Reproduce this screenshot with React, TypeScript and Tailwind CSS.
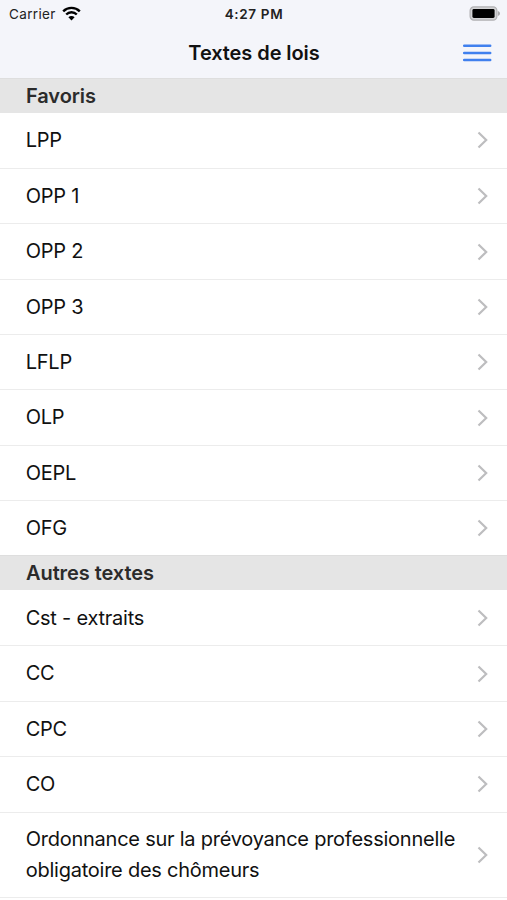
const sections = [
  {
    title: 'Favoris',
    items: ['LPP', 'OPP 1', 'OPP 2', 'OPP 3', 'LFLP', 'OLP', 'OEPL', 'OFG'],
  },
  {
    title: 'Autres textes',
    items: [
      'Cst - extraits',
      'CC',
      'CPC',
      'CO',
      'Ordonnance sur la prévoyance professionnelle obligatoire des chômeurs',
    ],
  },
];

function WifiIcon() {
  return (
    <svg className="-mt-px" width="19" height="15" viewBox="0 0 19 15" fill="none" stroke="#000" strokeWidth="2.4">
      <path d="M1.2 5.3a11.8 11.8 0 0 1 16.6 0" />
      <path d="M4.2 8.5a7.5 7.5 0 0 1 10.6 0" />
      <path d="M9.5 14.4 6.4 11.2a4.4 4.4 0 0 1 6.2 0Z" fill="#000" stroke="none" />
    </svg>
  );
}

function BatteryIcon() {
  return (
    <svg width="32" height="15" viewBox="0 0 32 15">
      <rect x="1.1" y="0.9" width="26.8" height="13.2" rx="3.8" fill="#d3d3d5" stroke="#b0b0b2" strokeWidth="1.2" />
      <rect x="3.4" y="3.1" width="22.2" height="8.8" rx="1.4" fill="#000" />
      <path d="M28.9 5v5c1.3-.5 2.1-1.4 2.1-2.5S30.2 5.5 28.9 5Z" fill="#a9a9ab" />
    </svg>
  );
}

function MenuIcon() {
  return (
    <svg width="30" height="20" viewBox="0 0 30 20" stroke="#4080ee" strokeWidth="2.5" strokeLinecap="round">
      <path d="M2.2 2.7h26M2.2 9.9h26M2.2 17.1h26" />
    </svg>
  );
}

function StatusBar() {
  return (
    <div className="grid h-[27px] grid-cols-3 items-center pl-[9px] pr-[6px] text-[13.5px] text-[#222]">
      <div className="flex items-center gap-[6px]">
        <span className="pt-px tracking-[0.35px]">Carrier</span>
        <WifiIcon />
      </div>
      <span className="-ml-[2px] pt-px text-center font-semibold tracking-[0.65px]">4:27 PM</span>
      <div className="flex justify-end">
        <BatteryIcon />
      </div>
    </div>
  );
}

function NavBar() {
  return (
    <div className="grid h-[51px] grid-cols-[46px_1fr_46px] items-center">
      <h1 className="col-start-2 ml-px text-center text-[20px] font-semibold leading-[28px] tracking-[-0.08px] text-[#111]">
        Textes de lois
      </h1>
      <button aria-label="Menu" className="pl-px">
        <MenuIcon />
      </button>
    </div>
  );
}

function Row({ label }: { label: string }) {
  return (
    <li className="flex min-h-[55.35px] items-center pl-[25.7px] pr-[18px]">
      <span className="flex-1 py-[11.6px] text-[20px] leading-[30.6px] tracking-[-0.24px] text-[#111]">{label}</span>
      <svg width="12" height="18" viewBox="0 0 12 18" fill="none" stroke="#bdbdbf" strokeWidth="2.2">
        <path d="m1.5 1.5 7.7 7.5-7.7 7.5" />
      </svg>
    </li>
  );
}

export default function App() {
  return (
    <div className="h-[900px] w-[507px] overflow-hidden bg-white font-['Inter',sans-serif]">
      <header className="bg-[#f4f5fa]">
        <StatusBar />
        <NavBar />
      </header>
      {sections.map((section) => (
        <section key={section.title} className="last:border-b last:border-[#ececec]">
          <h2 className="h-[34.7px] border-t border-[#dedede] bg-[#e5e5e5] pl-[26px] text-[20px] font-semibold leading-[34px] tracking-[-0.08px] text-[#2b2b2b]">
            {section.title}
          </h2>
          <ul className="[&>li+li]:border-t [&>li+li]:border-[#ececec]">
            {section.items.map((item) => (
              <Row key={item} label={item} />
            ))}
          </ul>
        </section>
      ))}
    </div>
  );
}
